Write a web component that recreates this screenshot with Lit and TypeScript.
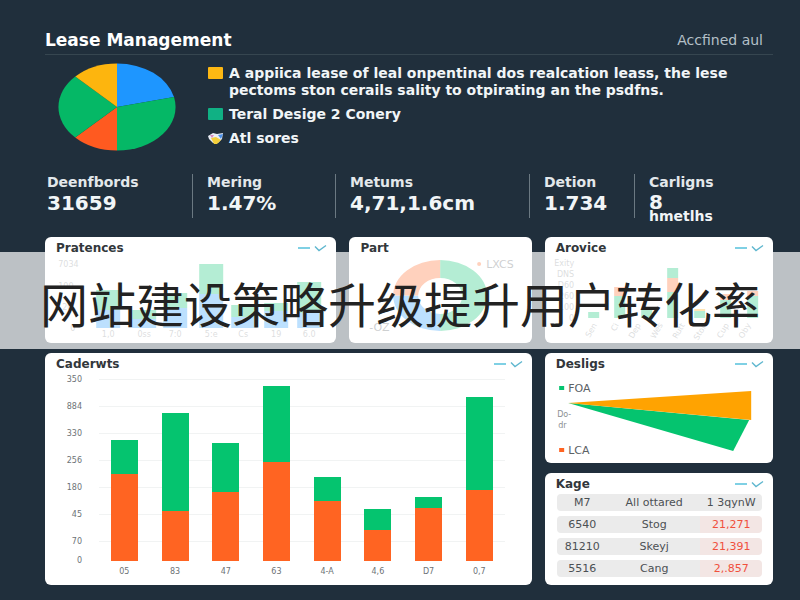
import { LitElement, html, svg, css, TemplateResult } from "lit";
import { customElement } from "lit/decorators.js";

interface Bar { label: string; top: number; bottom: number; }

const MONTHLY: Bar[] = [
  { label: "05", top: 34, bottom: 87 },
  { label: "83", top: 98, bottom: 50 },
  { label: "47", top: 49, bottom: 69 },
  { label: "63", top: 76, bottom: 99 },
  { label: "4-A", top: 24, bottom: 60 },
  { label: "4,6", top: 21, bottom: 31 },
  { label: "D7", top: 11, bottom: 53 },
  { label: "0,7", top: 93, bottom: 71 },
];
const AXIS = ["350", "884", "330", "256", "180", "45", "70", "0"];

// x, top of the green part, top of the blue part
const PRATENCES = [
  [51, 31, 51], [87, 51, 60], [118, 34, 49], [154, 5, 35],
  [186, 46, 58], [219, 44, 52], [252, 23, 54],
];
const PRATENCES_LABELS = ["1,0", "0ss", "7:0", "5:e", "Cs", "19", "6.0"];

// x, y, height, colour class
const AROVICE: [number, number, number, string][] = [
  [43, 53, 6, "green"], [69, 28, 9, "orange"], [69, 37, 22, "green"],
  [96, 51, 8, "green"], [122, 9, 10, "green"], [122, 19, 14, "orange"],
  [122, 33, 26, "green"], [149, 50, 2, "amber"], [149, 52, 7, "green"],
  [175, 35, 6, "orange"], [175, 41, 18, "green"], [202, 32, 5, "orange"],
  [202, 37, 22, "green"],
];

const STATS = [
  { label: "Deenfbords", value: "31659" },
  { label: "Mering", value: "1.47%" },
  { label: "Metums", value: "4,71,1.6cm" },
  { label: "Detion", value: "1.734" },
  { label: "Carligns", value: "8", unit: "hmetlhs" },
];

const ROWS = [
  ["6540", "Stog", "21,271"],
  ["81210", "Skeyj", "21,391"],
  ["5516", "Cang", "2,.857"],
];

@customElement("app-root")
export class AppRoot extends LitElement {
  static styles = css`
    :host { display: block; }
    * { box-sizing: border-box; }
    .page {
      position: relative;
      min-height: 100vh;
      padding: 26px 27px 15px 45px;
      background: #202f3c;
      color: #f1f5f7;
      font-family: "DejaVu Sans", sans-serif;
    }
    .top {
      display: flex;
      align-items: center;
      justify-content: space-between;
      height: 29px;
      padding-right: 10px;
      border-bottom: 1px solid #364650;
    }
    h1 { margin: 0; font-size: 17px; line-height: 28px; font-weight: 700; color: #fff; }
    .link { color: #b4c0c8; font-size: 14px; text-decoration: none; }
    .overview { display: flex; gap: 32px; padding: 8px 0 0 13px; }
    .pie { flex: none; width: 118px; height: 88px; display: block; }
    .legend {
      margin: 0; padding: 2px 0 0; list-style: none;
      display: flex; flex-direction: column; gap: 7px;
      font-size: 14px; line-height: 17px; font-weight: 700;
      white-space: nowrap;
    }
    .legend li { display: flex; gap: 6px; }
    .mark { flex: none; width: 15px; height: 12px; margin-top: 2px; border-radius: 1px; }
    .mark.yellow { background: #fdb813; }
    .mark.teal { background: #10b184; }
    .stats {
      display: grid;
      grid-template-columns: 147fr 143fr 194fr 105fr 139fr;
      height: 42px; margin: 23px 0 21px;
      font-weight: 700;
    }
    .stat { min-width: 0; padding-left: 14px; border-left: 1px solid #6b7982; }
    .stat:first-child { padding-left: 2px; border-left: 0; }
    .stat-label { font-size: 14px; line-height: 16px; color: #e3e8eb; }
    .stat-value { font-size: 20px; line-height: 26px; }
    .stat-value.short { line-height: 24px; }
    .stat-unit { font-size: 14px; line-height: 4px; }
    .cards {
      display: grid;
      grid-template-columns: 291fr 182fr 228fr;
      grid-template-rows: 106px 110px 112px;
      gap: 10px 13px;
    }
    .card { min-width: 0; background: #fff; border-radius: 6px; color: #555b60; }
    .card.wide { grid-column: span 2; grid-row: span 2; }
    .head {
      display: flex; align-items: center; justify-content: space-between;
      height: 22px; padding: 0 9px 0 11px;
    }
    h2 { margin: 0; font-size: 12px; line-height: 22px; font-weight: 700; color: #32373b; }
    .tool { padding: 0; border: 0; background: none; height: 10px; }
    .tool svg { display: block; width: 30px; height: 10px; }
    .chart { display: block; width: 100%; height: 84px; }
    .chart text { font-size: 8px; fill: #8b8f92; }
    .chart .strong { font-size: 11px; fill: #5c6165; }
    .green { fill: #05c46f; }
    .orange { fill: #ff6422; }
    .blue { fill: #1e96fa; }
    .amber { fill: #ffa301; }
    .bars { display: grid; grid-template-columns: 54px 1fr; padding-right: 27px; }
    .axis {
      display: grid; grid-template-rows: repeat(6, 27px) 19px 9px;
      padding: 0 17px 0 0; text-align: right;
      font-size: 8px; line-height: 9px; color: #6d7276;
    }
    .plot {
      display: flex; height: 182px; margin-top: 4px;
      background: repeating-linear-gradient(to bottom, #f1f3f3 0 1px, transparent 1px 27px);
    }
    .col { flex: 1; display: flex; flex-direction: column; justify-content: flex-end; align-items: center; }
    .seg { width: 27px; }
    .seg.g { background: #05c46f; }
    .seg.o { background: #ff6422; }
    .ticks { grid-column: 2; display: flex; font-size: 8px; line-height: 14px; color: #6d7276; }
    .ticks span { flex: 1; text-align: center; }
    .table-box { padding: 0 11px 0 12px; }
    table {
      width: 100%; table-layout: fixed; margin-top: -6px;
      border-collapse: separate; border-spacing: 0 5px;
      font-size: 11px; line-height: 17px; text-align: center; color: #4b5054;
    }
    th, td { padding: 0; background: #ebebeb; font-weight: 400; white-space: nowrap; }
    th:first-child, td:first-child { width: 25%; border-radius: 4px 0 0 4px; }
    th:nth-child(2), td:nth-child(2) { width: 45%; }
    th:last-child, td:last-child { width: 30%; border-radius: 0 4px 4px 0; }
    td:last-child { color: #f0503c; background: #f3e6e4; }
    .band {
      position: absolute; left: 0; right: 0; top: 252px;
      display: flex; align-items: center; justify-content: center;
      height: 97px;
      background: rgba(255, 255, 255, 0.7);
      color: #222;
      font: 400 48px/97px "Noto Sans CJK SC", sans-serif;
      white-space: nowrap;
    }
    .band span { padding-top: 4px; }
  `;

  private card(title: string, body: TemplateResult, tool = true, wide = false) {
    return html`<section class="card ${wide ? "wide" : ""}">
      <header class="head">
        <h2>${title}</h2>
        ${tool
          ? html`<button class="tool" type="button" aria-label="${title}">
              <svg viewBox="0 0 30 10" fill="none">
                <path d="M1 5H13" stroke="#7fd0e4" stroke-width="2" />
                <path d="M18 3.5L22 7.5L29 2.5" stroke="#5fb7cf" stroke-width="1.4" />
              </svg>
            </button>`
          : ""}
      </header>
      ${body}
    </section>`;
  }

  private pratences() {
    return html`<svg class="chart" viewBox="0 0 291 84">
      <text x="13" y="8">7034</text>
      <text x="13" y="30">100</text>
      <text x="17" y="51">20</text>
      <text x="25" y="72">0</text>
      ${PRATENCES.map(([x, g, b], i) => svg`
        <rect class="green" x=${x} y=${g} width="24" height=${b - g} />
        <rect class="blue" x=${x} y=${b} width="24" height=${69 - b} />
        <text x=${x + 12} y="78" text-anchor="middle">${PRATENCES_LABELS[i]}</text>`)}
    </svg>`;
  }

  private donut() {
    return html`<svg class="chart" viewBox="0 0 182 84">
      <path class="green" d="M91 1A47 35.5 0 0 1 91 72V55A22 18 0 0 0 91 19Z" />
      <path class="blue" d="M91 72A47 35.5 0 0 1 44 36.5H69A22 18 0 0 0 91 55Z" />
      <path class="orange" d="M44 36.5A47 35.5 0 0 1 91 1V19A22 18 0 0 0 69 36.5Z" />
      <circle class="orange" cx="130" cy="5" r="2" />
      <text class="strong" x="137" y="9">LXCS</text>
      <text class="strong" x="20" y="72">-OZ</text>
    </svg>`;
  }

  private arovice() {
    return html`<svg class="chart" viewBox="0 0 228 84">
      ${["Exity", "DNS", "D60", "260", "100", "0"].map((t, i) => svg`
        <text x="29" y=${7 + i * 11} text-anchor="end">${t}</text>`)}
      ${AROVICE.map(([x, y, h, c]) => svg`
        <rect class=${c} x=${x} y=${y} width="11" height=${h} />`)}
      ${["Sen", "Ci", "Dep", "Wes", "Rutt", "Ston", "Cup", "Oby"].map((t, i) => svg`
        <text x=${52 + i * 22} y="66" text-anchor="end"
          transform="rotate(-60 ${52 + i * 22} 66)">${t}</text>`)}
    </svg>`;
  }

  private design() {
    return html`<svg class="chart" viewBox="0 0 228 84">
      <path class="green" d="M23 28L204 45L188 76Z" />
      <path class="amber" d="M23 28L206 16V45Z" />
      <rect class="green" x="14" y="11" width="5" height="4" />
      <text class="strong" x="23" y="17">FOA</text>
      <text x="12" y="42">Do-</text>
      <text x="13" y="53">dr</text>
      <rect class="orange" x="14" y="73" width="5" height="4" />
      <text class="strong" x="23" y="79">LCA</text>
    </svg>`;
  }

  private monthly() {
    return html`<div class="bars">
      <div class="axis">${AXIS.map((a) => html`<span>${a}</span>`)}</div>
      <div class="plot">
        ${MONTHLY.map((b) => html`<div class="col">
          <div class="seg g" style="height:${b.top}px"></div>
          <div class="seg o" style="height:${b.bottom}px"></div>
        </div>`)}
      </div>
      <div class="ticks">${MONTHLY.map((b) => html`<span>${b.label}</span>`)}</div>
    </div>`;
  }

  private table() {
    return html`<div class="table-box"><table>
      <thead><tr><th>M7</th><th>All ottared</th><th>1 3qynW</th></tr></thead>
      <tbody>
        ${ROWS.map((r) => html`<tr>${r.map((c) => html`<td>${c}</td>`)}</tr>`)}
      </tbody>
    </table></div>`;
  }

  render() {
    return html`<main class="page">
      <header class="top">
        <h1>Lease Management</h1>
        <a class="link" href="#">Accfined aul</a>
      </header>
      <section class="overview">
        <svg class="pie" viewBox="0 0 118 88">
          <path fill="#1e96ff" d="M59 44V.5A58.5 43.5 0 0 1 116 34Z" />
          <path fill="#05b866" d="M59 44L116 34A58.5 43.5 0 0 1 59 87.5Z" />
          <path fill="#ff5a20" d="M59 87.5A58.5 43.5 0 0 1 17.2 74.5L59 44Z" />
          <path fill="#05b866" d="M59 44L17.2 74.5A58.5 43.5 0 0 1 17.3 13.5Z" />
          <path fill="#fdb50e" d="M59 44L17.3 13.5A58.5 43.5 0 0 1 59 .5Z" />
        </svg>
        <ul class="legend">
          <li><span class="mark yellow"></span>
            <span>A appiica lease of leal onpentinal dos realcation leass, the lese<br />pectoms ston cerails sality to otpirating an the psdfns.</span></li>
          <li><span class="mark teal"></span><span>Teral Desige 2 Conery</span></li>
          <li>
            <svg class="mark" viewBox="0 0 15 12">
              <path fill="#e9edf5" d="M0 4L5 1L9 2L15 1L14 7L10 11H5L1 7Z" />
              <path fill="#f3cf3b" d="M3 6L8 5L13 8L9 12H6Z" />
              <path fill="#4a8fe8" d="M10 3L15 2L13 7Z" />
              <path fill="#d58ac0" d="M2 3L6 3L4 6Z" />
            </svg>
            <span>Atl sores</span></li>
        </ul>
      </section>
      <section class="stats">
        ${STATS.map((s) => html`<div class="stat">
          <div class="stat-label">${s.label}</div>
          <div class="stat-value ${s.unit ? "short" : ""}">${s.value}</div>
          ${s.unit ? html`<div class="stat-unit">${s.unit}</div>` : ""}
        </div>`)}
      </section>
      <section class="cards">
        ${this.card("Pratences", this.pratences())}
        ${this.card("Part", this.donut(), false)}
        ${this.card("Arovice", this.arovice())}
        ${this.card("Caderwts", this.monthly(), true, true)}
        ${this.card("Desligs", this.design())}
        ${this.card("Kage", this.table())}
      </section>
      <div class="band"><span>网站建设策略升级提升用户转化率</span></div>
    </main>`;
  }
}
